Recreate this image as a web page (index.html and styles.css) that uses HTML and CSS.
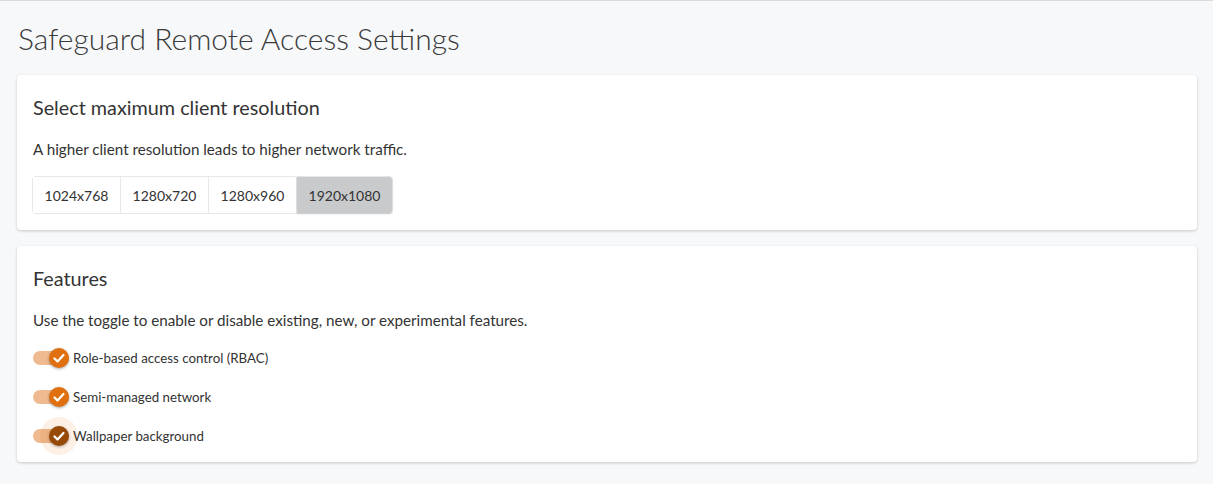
FILE: index.html
```html
<!DOCTYPE html>
<html lang="en">
<head>
    <meta charset="UTF-8">
    <title>Safeguard Remote Access Settings</title>
    <link rel="stylesheet" href="styles.css">
</head>
<body>
    <div class="page">
        <h1>Safeguard Remote Access Settings</h1>

        <div class="card">
            <h2>Select maximum client resolution</h2>
            <p>A higher client resolution leads to higher network traffic.</p>
            <div class="btn-group">
                <button>1024x768</button>
                <button>1280x720</button>
                <button>1280x960</button>
                <button class="selected">1920x1080</button>
            </div>
        </div>

        <div class="card features">
            <h2>Features</h2>
            <p>Use the toggle to enable or disable existing, new, or experimental features.</p>
            <div class="toggle-row">
                <span class="toggle"><span class="thumb"><svg viewBox="0 0 20 20"><path d="M5.5 10.5l3 3 6-6.5" /></svg></span></span>
                <span>Role-based access control (RBAC)</span>
            </div>
            <div class="toggle-row">
                <span class="toggle"><span class="thumb"><svg viewBox="0 0 20 20"><path d="M5.5 10.5l3 3 6-6.5" /></svg></span></span>
                <span>Semi-managed network</span>
            </div>
            <div class="toggle-row">
                <span class="toggle focused"><span class="thumb"><svg viewBox="0 0 20 20"><path d="M5.5 10.5l3 3 6-6.5" /></svg></span></span>
                <span>Wallpaper background</span>
            </div>
        </div>
    </div>
</body>
</html>
```

FILE: styles.css
```css
body {
    margin: 0;
    font-family: "Source Sans Pro", Lato, "Noto Sans", sans-serif;
    background-color: #f7f8fa;
    color: #333;
    border-top: 1px solid #dcdcdc;
}
.page {
    padding: 0 16px 16px 17px;
}
h1 {
    font-size: 30px;
    font-weight: 300;
    margin: 0;
    padding: 19px 0 19px 1px;
    color: #3a3a3a;
}
.card {
    background-color: #fff;
    border-radius: 4px;
    box-shadow: 0 1px 3px rgba(0, 0, 0, 0.2);
    padding: 20px 16px 17px;
    margin-bottom: 16px;
}
h2 {
    font-size: 19.8px;
    font-weight: 400;
    margin: 0 0 21px;
    color: #333;
}
p {
    font-size: 15.2px;
    margin: 0 0 19px;
}
.features {
    padding-bottom: 14px;
}
.features p {
    margin-bottom: 17px;
}
.btn-group {
    display: inline-flex;
    border-radius: 3px;
    box-shadow: 0 0 0 1px #e8e8e8;
}
.btn-group button {
    font-family: inherit;
    font-size: 14px;
    color: #333;
    background-color: #fff;
    border: none;
    border-right: 1px solid #e8e8e8;
    height: 36px;
    width: 88px;
    padding: 0;
}
.btn-group button.selected {
    background-color: #c8cacc;
    border-right: none;
    width: 95px;
    border-radius: 0 3px 3px 0;
    box-shadow: 0 1px 2px rgba(0, 0, 0, 0.15);
}
.toggle-row {
    display: flex;
    align-items: center;
    gap: 4px;
    font-size: 13.3px;
    height: 24px;
    margin-bottom: 15px;
}
.toggle-row:last-child {
    margin-bottom: 0;
}
.toggle {
    position: relative;
    width: 36px;
    height: 14px;
    border-radius: 7px;
    background-color: #efba8f;
}
.thumb {
    position: absolute;
    left: 16px;
    top: -3px;
    width: 20px;
    height: 20px;
    border-radius: 50%;
    background-color: #e0700f;
    box-shadow: 0 1px 3px rgba(0, 0, 0, 0.35);
}
.focused .thumb {
    background-color: #974a08;
    box-shadow: 0 0 0 9px rgba(224, 112, 15, 0.1), 0 1px 3px rgba(0, 0, 0, 0.35);
}
.thumb svg {
    width: 20px;
    height: 20px;
    fill: none;
    stroke: #fff;
    stroke-width: 2.2;
    stroke-linecap: round;
    stroke-linejoin: round;
}
```
